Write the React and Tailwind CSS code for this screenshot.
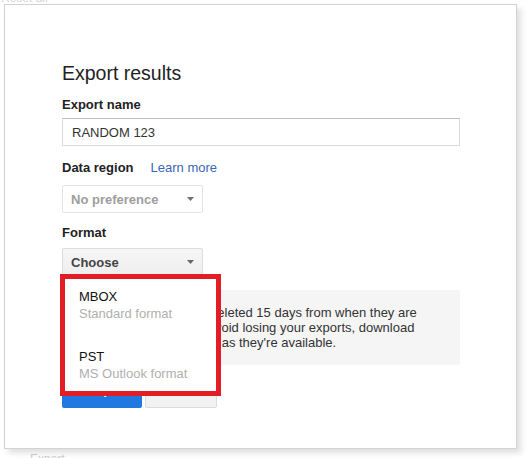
import React from "react";

function Caret({ color }) {
  return (
    <svg width="7" height="4" viewBox="0 0 7 4" className="block">
      <path d="M0 0H7L3.5 4Z" fill={color} />
    </svg>
  );
}

export default function App() {
  return (
    <div className="relative w-[529px] h-[458px] overflow-hidden bg-white font-['Liberation_Sans',Arial,sans-serif]">
      {/* background page */}
      <div className="flex h-full flex-col justify-between">
        <div className="-mt-[9px] pl-[1px] text-[12px] leading-[14px] text-[#d6d6d6]">Reset all</div>
        <div className="-mb-[8px] pl-[30px] text-[12px] leading-[14px] text-[#d0d0d0]">Export</div>
      </div>

      {/* dialog */}
      <div className="absolute left-[4px] top-[4px] w-[513px] h-[445px] border border-[#d2d2d2] bg-white shadow-[4px_4px_6px_rgba(0,0,0,0.13)]">
        <div className="flex flex-col items-start pl-[57px] pt-[56px]">
          <div className="text-[19.5px] leading-[24px] text-[#222]">Export results</div>

          <div className="mt-[12px] text-[13px] leading-[15px] font-bold text-[#222]">Export name</div>
          <div className="mt-[6px] flex h-[28px] w-[398px] items-center border border-[#dadada] border-t-[#bdbdbd] pl-[9px] text-[13px] leading-[15px] text-[#333]">
            RANDOM 123
          </div>

          <div className="mt-[14px] flex text-[13px] leading-[15px]">
            <span className="font-bold text-[#222]">Data region</span>
            <span className="ml-[17px] text-[#3a66b8]">Learn more</span>
          </div>
          <div className="mt-[10px] flex h-[28px] w-[141px] items-center justify-between rounded-[2px] border border-[#e3e3e3] bg-white pl-[8px] pr-[8px] text-[13px] leading-[15px] font-bold text-[#9e9e9e]">
            <span>No preference</span>
            <Caret color="#707070" />
          </div>

          <div className="mt-[12px] text-[13px] leading-[15px] font-bold text-[#222]">Format</div>
          <div className="relative mt-[8px]">
            <div className="flex h-[28px] w-[141px] items-center justify-between rounded-[2px] border border-[#dcdcdc] bg-gradient-to-b from-[#f6f6f6] to-[#eeeeee] pl-[8px] pr-[8px] text-[13px] leading-[15px] font-bold text-[#444]">
              <span>Choose</span>
              <Caret color="#666" />
            </div>
            <div className="absolute left-[-2px] top-[26px] z-10 w-[161px] h-[122px] border-[5px] border-[#e31d25] bg-white text-[13px] leading-[15px]">
              <div className="pl-[14px] pt-[10px] pb-[14px]">
                <div className="text-[#111]">MBOX</div>
                <div className="mt-[2px] text-[#b0b0b0]">Standard format</div>
              </div>
              <div className="pl-[14px] pt-[14px]">
                <div className="text-[#111]">PST</div>
                <div className="mt-[2px] text-[#b0b0b0]">MS Outlook format</div>
              </div>
            </div>
          </div>

          <div className="mt-[14px] h-[75px] w-[398px] rounded-[2px] bg-[#f5f5f5] pl-[78px] pt-[15px] text-[13px] leading-[15px] text-[#333] whitespace-nowrap">
            Exports are deleted 15 days from when they are
            <br />
            created. To avoid losing your exports, download
            <br />
            them as soon as they're available.
          </div>

          <div className="mt-[15px] flex gap-[3px]">
            <div className="flex h-[28px] w-[80px] items-start justify-center rounded-[2px] bg-[#2079e0] pt-[2px] pl-[12px] text-[13px] leading-[15px] font-bold text-white">
              Export
            </div>
            <div className="flex h-[28px] w-[72px] items-start justify-center rounded-[2px] border border-[#dcdcdc] bg-[#f2f2f2] pt-[1px] text-[13px] leading-[15px] font-bold text-[#444]">
              Cancel
            </div>
          </div>
        </div>
      </div>
    </div>
  );
}
